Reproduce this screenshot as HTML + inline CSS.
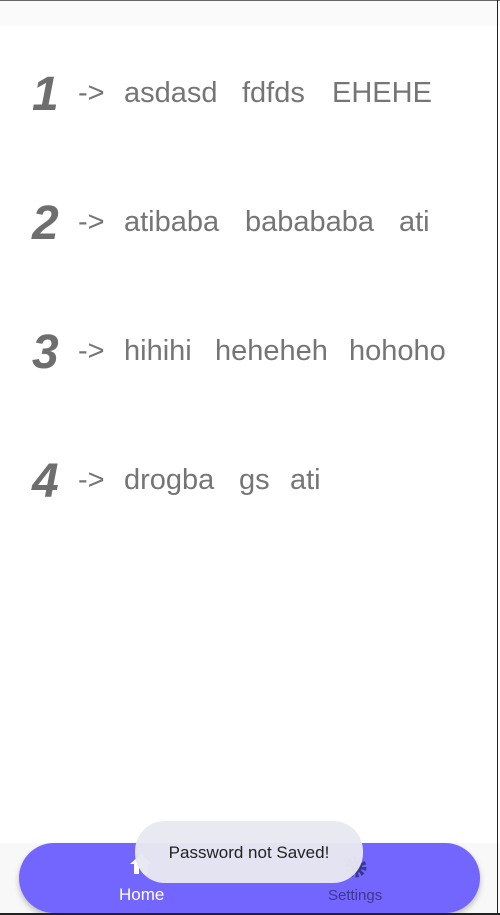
<!DOCTYPE html>
<html><head><style>
body{margin:0;width:500px;height:915px;background:#fff;position:relative;overflow:hidden;font-family:"Liberation Sans",sans-serif}
.top{position:absolute;left:0;top:0;width:500px;height:26px;background:#fafafa;border-top:1px solid #666;box-sizing:border-box}
.row{position:absolute;left:0;width:500px;height:60px}
.n{position:absolute;left:32px;font-size:48px;font-weight:bold;font-style:italic;color:#6e6e6e;line-height:1;top:1px}
.w{position:absolute;font-size:29px;color:#757575;white-space:pre;line-height:1;top:9px}
.bot{position:absolute;left:0;top:843px;width:500px;height:72px;background:#f8f8f8}
.nav{position:absolute;left:19px;top:843px;width:461px;height:70px;background:#7366ff;border-radius:35px;box-shadow:0 3px 6px rgba(0,0,0,.25)}
.lbl{position:absolute;font-size:17px}
.toast{position:absolute;left:135px;top:821px;width:228px;height:62px;border-radius:30px;background:rgba(232,232,240,.96);text-align:center;line-height:64px;font-size:17px;color:#222}
</style></head><body>
<div class="top"></div>
<div class="row" style="top:70px"><span class="n">1</span><span class="w" style="left:78px">-></span><span class="w" style="left:124px">asdasd</span><span class="w" style="left:242px">fdfds</span><span class="w" style="left:332px">EHEHE</span></div>
<div class="row" style="top:199px"><span class="n">2</span><span class="w" style="left:78px">-></span><span class="w" style="left:124px">atibaba</span><span class="w" style="left:245px">babababa</span><span class="w" style="left:399px">ati</span></div>
<div class="row" style="top:328px"><span class="n">3</span><span class="w" style="left:78px">-></span><span class="w" style="left:124px">hihihi</span><span class="w" style="left:215px">heheheh</span><span class="w" style="left:349px">hohoho</span></div>
<div class="row" style="top:457px"><span class="n">4</span><span class="w" style="left:78px">-></span><span class="w" style="left:124px">drogba</span><span class="w" style="left:239px">gs</span><span class="w" style="left:290px">ati</span></div>
<div class="bot"></div>
<div class="nav">
<svg style="position:absolute;left:110px;top:10px" width="24" height="22" viewBox="0 0 24 22"><path d="M12 1L1 11h4v10h5v-6h4v6h5V11h4z" fill="#fff"/></svg>
<svg style="position:absolute;left:325px;top:12px" width="24" height="24" viewBox="0 0 24 24"><circle cx="12" cy="12" r="8" fill="none" stroke="#3d3690" stroke-width="5" stroke-dasharray="3 2"/><circle cx="12" cy="12" r="6" fill="#3d3690"/></svg>
<span class="lbl" style="left:100px;top:42px;color:#fff">Home</span>
<span class="lbl" style="left:309px;top:44px;color:#3d3690;font-size:15px">Settings</span>
</div>
<div class="toast">Password not Saved!</div>
<div style="position:absolute;left:497px;top:0;width:1px;height:915px;background:#222"></div>
<div style="position:absolute;left:0;top:913px;width:500px;height:2px;background:#222"></div>
</body></html>
